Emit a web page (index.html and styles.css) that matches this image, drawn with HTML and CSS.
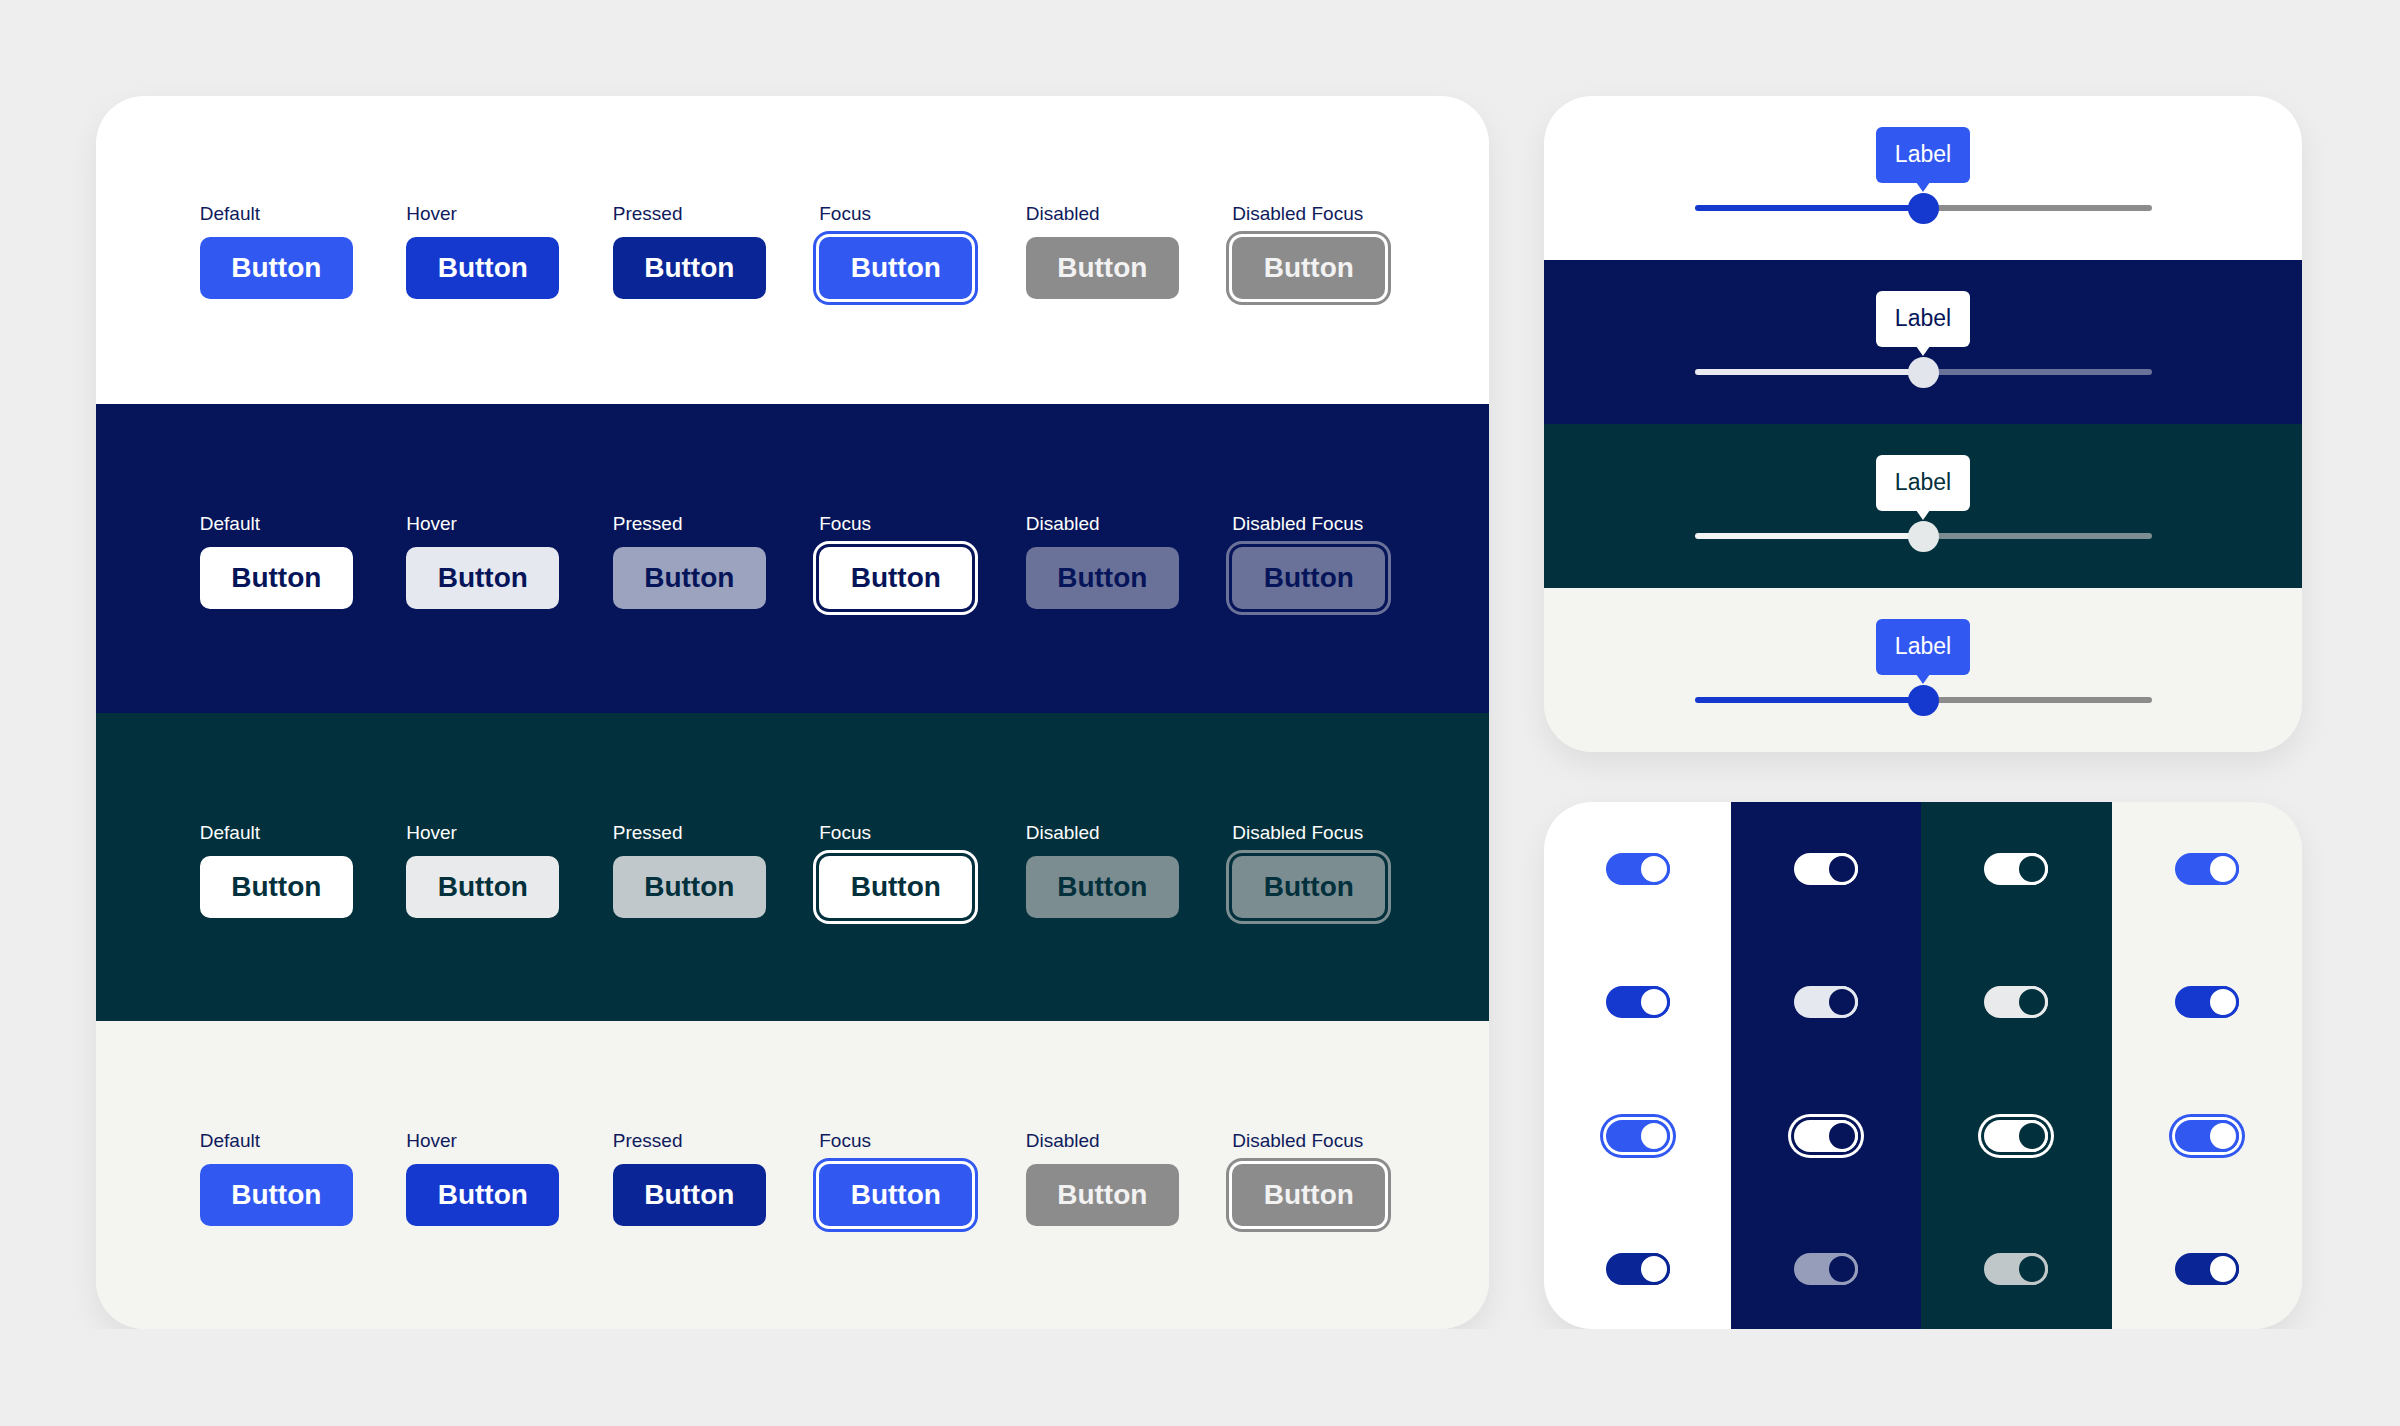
FILE: index.html
```html
<!DOCTYPE html>
<html>
<head>
    <title>Component States</title>
    <link rel="stylesheet" href="styles.css">
</head>
<body>
    <div class="page">
        <!-- Botões -->
        <div class="card buttons-card">
            <div class="band theme-light">
                <div class="btn-row">
                    <div class="state"><span class="state-label">Default</span><span class="btn">Button</span></div>
                    <div class="state"><span class="state-label">Hover</span><span class="btn hover">Button</span></div>
                    <div class="state"><span class="state-label">Pressed</span><span class="btn pressed">Button</span></div>
                    <div class="state"><span class="state-label">Focus</span><span class="btn focus">Button</span></div>
                    <div class="state"><span class="state-label">Disabled</span><span class="btn disabled">Button</span></div>
                    <div class="state"><span class="state-label">Disabled Focus</span><span class="btn disabled focus">Button</span></div>
                </div>
            </div>
            <div class="band theme-navy">
                <div class="btn-row">
                    <div class="state"><span class="state-label">Default</span><span class="btn">Button</span></div>
                    <div class="state"><span class="state-label">Hover</span><span class="btn hover">Button</span></div>
                    <div class="state"><span class="state-label">Pressed</span><span class="btn pressed">Button</span></div>
                    <div class="state"><span class="state-label">Focus</span><span class="btn focus">Button</span></div>
                    <div class="state"><span class="state-label">Disabled</span><span class="btn disabled">Button</span></div>
                    <div class="state"><span class="state-label">Disabled Focus</span><span class="btn disabled focus">Button</span></div>
                </div>
            </div>
            <div class="band theme-teal">
                <div class="btn-row">
                    <div class="state"><span class="state-label">Default</span><span class="btn">Button</span></div>
                    <div class="state"><span class="state-label">Hover</span><span class="btn hover">Button</span></div>
                    <div class="state"><span class="state-label">Pressed</span><span class="btn pressed">Button</span></div>
                    <div class="state"><span class="state-label">Focus</span><span class="btn focus">Button</span></div>
                    <div class="state"><span class="state-label">Disabled</span><span class="btn disabled">Button</span></div>
                    <div class="state"><span class="state-label">Disabled Focus</span><span class="btn disabled focus">Button</span></div>
                </div>
            </div>
            <div class="band theme-light theme-off">
                <div class="btn-row">
                    <div class="state"><span class="state-label">Default</span><span class="btn">Button</span></div>
                    <div class="state"><span class="state-label">Hover</span><span class="btn hover">Button</span></div>
                    <div class="state"><span class="state-label">Pressed</span><span class="btn pressed">Button</span></div>
                    <div class="state"><span class="state-label">Focus</span><span class="btn focus">Button</span></div>
                    <div class="state"><span class="state-label">Disabled</span><span class="btn disabled">Button</span></div>
                    <div class="state"><span class="state-label">Disabled Focus</span><span class="btn disabled focus">Button</span></div>
                </div>
            </div>
        </div>

        <div class="side">
            <!-- Sliders -->
            <div class="card slider-card">
                <div class="band theme-light">
                    <div class="slider">
                        <div class="tip">Label</div>
                        <div class="rail"><div class="track"></div><div class="thumb"></div></div>
                    </div>
                </div>
                <div class="band theme-navy">
                    <div class="slider">
                        <div class="tip">Label</div>
                        <div class="rail"><div class="track"></div><div class="thumb"></div></div>
                    </div>
                </div>
                <div class="band theme-teal">
                    <div class="slider">
                        <div class="tip">Label</div>
                        <div class="rail"><div class="track"></div><div class="thumb"></div></div>
                    </div>
                </div>
                <div class="band theme-light theme-off">
                    <div class="slider">
                        <div class="tip">Label</div>
                        <div class="rail"><div class="track"></div><div class="thumb"></div></div>
                    </div>
                </div>
            </div>

            <!-- Toggles -->
            <div class="card toggle-card">
                <div class="col theme-light">
                    <div class="cell"><span class="toggle"><span class="knob"></span></span></div>
                    <div class="cell"><span class="toggle hover"><span class="knob"></span></span></div>
                    <div class="cell"><span class="toggle focus"><span class="knob"></span></span></div>
                    <div class="cell"><span class="toggle pressed"><span class="knob"></span></span></div>
                </div>
                <div class="col theme-navy">
                    <div class="cell"><span class="toggle"><span class="knob"></span></span></div>
                    <div class="cell"><span class="toggle hover"><span class="knob"></span></span></div>
                    <div class="cell"><span class="toggle focus"><span class="knob"></span></span></div>
                    <div class="cell"><span class="toggle pressed"><span class="knob"></span></span></div>
                </div>
                <div class="col theme-teal">
                    <div class="cell"><span class="toggle"><span class="knob"></span></span></div>
                    <div class="cell"><span class="toggle hover"><span class="knob"></span></span></div>
                    <div class="cell"><span class="toggle focus"><span class="knob"></span></span></div>
                    <div class="cell"><span class="toggle pressed"><span class="knob"></span></span></div>
                </div>
                <div class="col theme-light theme-off">
                    <div class="cell"><span class="toggle"><span class="knob"></span></span></div>
                    <div class="cell"><span class="toggle hover"><span class="knob"></span></span></div>
                    <div class="cell"><span class="toggle focus"><span class="knob"></span></span></div>
                    <div class="cell"><span class="toggle pressed"><span class="knob"></span></span></div>
                </div>
            </div>
        </div>
    </div>
</body>
</html>
```
FILE: styles.css
```css
:root {
    --page: #eeeeee;
    --blue: #3159f2;
    --blue-hover: #1538cf;
    --blue-pressed: #0a2595;
    --navy: #061559;
    --teal: #02303c;
    --off: #f4f4f0;
}

body {
    margin: 0;
    background: var(--page);
    font-family: 'Liberation Sans', Arial, sans-serif;
}

.page {
    display: flex;
    gap: 55px;
    padding: 96px 0 0 96px;
}

.card {
    border-radius: 48px;
    overflow: hidden;
    box-shadow: 0 12px 30px rgba(0,0,0,0.07);
}

/* Temas das faixas */
.theme-light {
    background: #fff;
    --label: #0f1b5c;
    --b-default: var(--blue);
    --b-hover: var(--blue-hover);
    --b-pressed: var(--blue-pressed);
    --b-text: #fff;
    --b-disabled: #8c8c8c;
    --b-disabled-text: #f2f2f2;
    --gap: #fff;
    --ring: var(--blue);
    --tip-bg: var(--blue);
    --tip-text: #fff;
    --fill: var(--blue-hover);
    --rest: #8c8c8c;
    --thumb: var(--blue-hover);
    --t-pressed: var(--blue-pressed);
    --knob: #fff;
}

.theme-off {
    background: var(--off);
}

.theme-navy {
    background: var(--navy);
    --label: #fff;
    --b-default: #fff;
    --b-hover: #e6e8ef;
    --b-pressed: #9ca3bf;
    --b-text: var(--navy);
    --b-disabled: #6b7299;
    --b-disabled-text: var(--navy);
    --gap: var(--navy);
    --ring: #fff;
    --tip-bg: #fff;
    --tip-text: var(--navy);
    --fill: #e8eaf0;
    --rest: #6b7299;
    --thumb: #e3e5ec;
    --t-pressed: #959dbb;
    --knob: var(--navy);
}

.theme-teal {
    background: var(--teal);
    --label: #fff;
    --b-default: #fff;
    --b-hover: #e8eaeb;
    --b-pressed: #c0c8cb;
    --b-text: var(--teal);
    --b-disabled: #7b8d91;
    --b-disabled-text: var(--teal);
    --gap: var(--teal);
    --ring: #fff;
    --tip-bg: #fff;
    --tip-text: var(--teal);
    --fill: #f2f4f4;
    --rest: #7b8d91;
    --thumb: #e6e9ea;
    --t-pressed: #bfc7c9;
    --knob: var(--teal);
}

/* Botões */
.buttons-card {
    width: 1393px;
    height: 1233px;
    display: flex;
    flex-direction: column;
}

.buttons-card .band {
    height: 308.25px;
    box-sizing: border-box;
    flex: none;
    display: flex;
    align-items: center;
    justify-content: center;
}

.buttons-card .band + .band {
    padding-top: 5px;
}

.btn-row {
    display: grid;
    grid-template-columns: repeat(6, 153px);
    column-gap: 53.5px;
}

.state {
    display: flex;
    flex-direction: column;
    gap: 11px;
}

.state-label {
    font-size: 19px;
    line-height: 24px;
    color: var(--label);
    white-space: nowrap;
}

.btn {
    height: 62px;
    border-radius: 10px;
    display: flex;
    align-items: center;
    justify-content: center;
    font-size: 28px;
    font-weight: 700;
    background: var(--b-default);
    color: var(--b-text);
}

.btn.hover { background: var(--b-hover); }
.btn.pressed { background: var(--b-pressed); }

.btn.focus {
    box-shadow: 0 0 0 3px var(--gap), 0 0 0 6px var(--ring);
}

.btn.disabled {
    background: var(--b-disabled);
    color: var(--b-disabled-text);
}

.btn.disabled.focus {
    box-shadow: 0 0 0 3px var(--gap), 0 0 0 6px var(--b-disabled);
}

/* Lado direito */
.side {
    width: 758px;
    display: flex;
    flex-direction: column;
    gap: 50px;
}

.slider-card {
    height: 656px;
    display: flex;
    flex-direction: column;
}

.slider-card .band {
    flex: 1;
    display: flex;
    align-items: center;
    justify-content: center;
    padding-bottom: 6px;
}

.slider {
    display: flex;
    flex-direction: column;
    align-items: center;
}

.tip {
    position: relative;
    width: 94px;
    height: 56px;
    border-radius: 6px;
    background: var(--tip-bg);
    color: var(--tip-text);
    font-size: 23px;
    display: flex;
    align-items: center;
    justify-content: center;
}

.tip::after {
    content: '';
    position: absolute;
    left: 50%;
    bottom: -9px;
    margin-left: -7px;
    border-left: 7px solid transparent;
    border-right: 7px solid transparent;
    border-top: 10px solid var(--tip-bg);
}

.rail {
    position: relative;
    width: 457px;
    height: 31px;
    margin-top: 10px;
    display: flex;
    align-items: center;
}

.track {
    flex: 1;
    height: 6px;
    border-radius: 3px;
    background: linear-gradient(to right, var(--fill) 50%, var(--rest) 50%);
}

.thumb {
    position: absolute;
    left: 50%;
    top: 0;
    width: 31px;
    height: 31px;
    margin-left: -15.5px;
    border-radius: 50%;
    background: var(--thumb);
}

/* Toggles */
.toggle-card {
    height: 527px;
    display: grid;
    grid-template-columns: 187px 1fr 1fr 1fr;
}

.col {
    display: flex;
    flex-direction: column;
}

.cell {
    height: 133.5px;
    flex: none;
    display: flex;
    align-items: center;
    justify-content: center;
}

.toggle {
    --track: var(--b-default);
    width: 64px;
    height: 32px;
    border-radius: 16px;
    background: var(--track);
    display: flex;
    justify-content: flex-end;
}

.toggle.hover { --track: var(--b-hover); }
.toggle.pressed { --track: var(--t-pressed); }

.toggle.focus {
    box-shadow: 0 0 0 3px var(--gap), 0 0 0 6px var(--ring);
}

.knob {
    width: 32px;
    height: 32px;
    box-sizing: border-box;
    border-radius: 50%;
    border: 3px solid var(--track);
    background: var(--knob);
}
```
